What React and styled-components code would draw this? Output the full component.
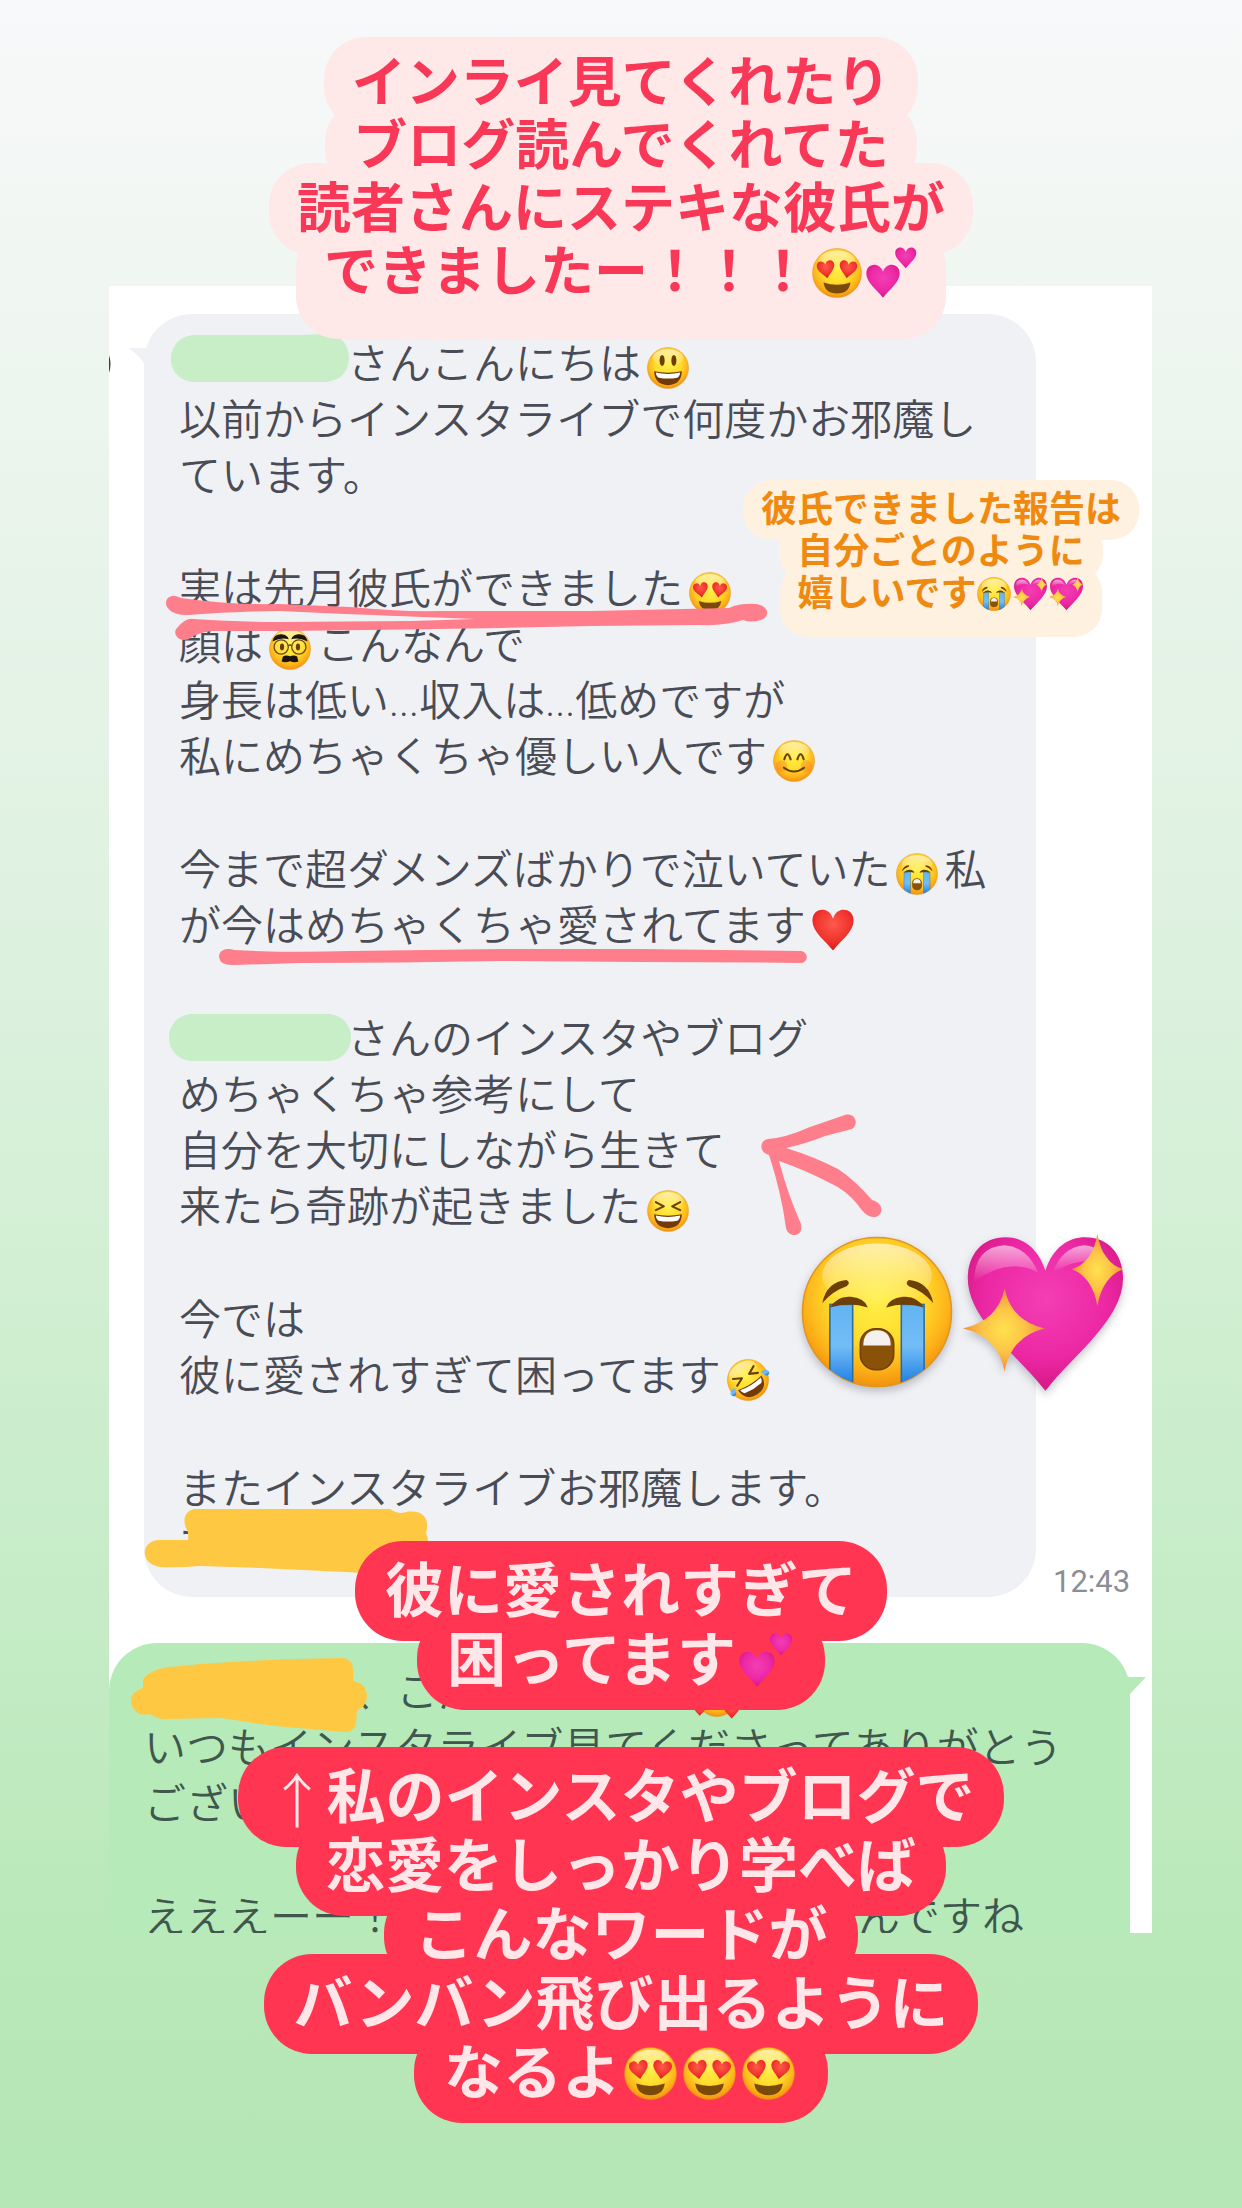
import styled, { createGlobalStyle } from "styled-components";

const GlobalStyle = createGlobalStyle`
  * {
    box-sizing: border-box;
  }
  body {
    margin: 0;
    font-family: Roboto, "Noto Sans CJK JP", sans-serif;
  }
`;

const Story = styled.main`
  position: relative;
  overflow: hidden;
  padding: 286px 90px 275px 109px;
  background: linear-gradient(#f8f9fa 0%, #eaf4ec 22%, #dcf1de 45%, #c9edca 68%, #b9e8b9 88%, #b5e6b5 100%);
`;

const Sheet = styled.section`
  padding-top: 28px;
  overflow: hidden;
  background: #ffffff;
`;

const MessageRow = styled.div`
  display: flex;
  align-items: flex-end;
  padding-left: 35px;
  margin-bottom: 46px;
`;

const Bubble = styled.article`
  flex: 1;
  min-width: 0;
  display: flex;
  flex-direction: column;
  gap: 57px;
  border-radius: 48px;
  font-size: 42px;
  font-weight: 350;
  line-height: 56px;
  white-space: nowrap;
`;

const ReceivedBubble = styled(Bubble)`
  padding: 23px 35px;
  color: #494c55;
  background: #f0f1f5;
`;

const SentBubble = styled(Bubble)`
  padding: 22px 35px 0;
  margin: 0 22px -13px 0;
  border-radius: 48px 48px 0 0;
  color: #3f574c;
  background: #b6eab9;
`;

const Paragraph = styled.p`
  margin: 0;
`;

const Line = styled.span`
  display: flex;
  align-items: center;
  height: 56px;
`;

const Blank = styled.span`
  flex: none;
  width: ${({ $chars }) => $chars}em;
`;

const Time = styled.time`
  flex: none;
  width: 116px;
  padding-left: 17px;
  font-size: 31px;
  line-height: 30px;
  color: #8b8e97;
`;

const Icon = styled.svg`
  flex: none;
  width: ${({ $size }) => $size}px;
  height: ${({ $size }) => $size}px;
  margin: ${({ $drop }) => $drop}px ${({ $side }) => $side}px 0;
  overflow: visible;
`;

const Drawing = styled.svg`
  position: absolute;
  top: 0;
  left: 0;
  width: 1242px;
  height: 2208px;
  pointer-events: none;
`;

const Defs = styled.svg`
  position: absolute;
  width: 0;
  height: 0;
`;

const BigEmojis = styled.div`
  position: absolute;
  top: 1234px;
  left: 801px;
  display: flex;
  gap: 10px;
  filter: drop-shadow(0 4px 4px rgba(60, 60, 80, 0.3));
`;

const Label = styled.p`
  position: absolute;
  isolation: isolate;
  display: flex;
  flex-direction: column;
  align-items: center;
  margin: 0;
  font-weight: 700;
  white-space: nowrap;
`;

const LabelLine = styled.span`
  position: relative;
  display: flex;
  align-items: center;

  &::before {
    content: "";
    position: absolute;
    z-index: -1;
  }
`;

const TitleLabel = styled(Label)`
  top: 52px;
  left: 0;
  right: 0;
  font-size: 54px;
  line-height: 63px;
  color: #f93858;

  ${LabelLine}::before {
    inset: -15px -28px -14px;
    border-radius: 42px;
    background: #fee8e8;
  }
  ${LabelLine}:last-child::before {
    bottom: -35px;
  }
`;

const NoteLabel = styled(Label)`
  top: 489px;
  right: 121px;
  font-size: 36px;
  line-height: 42px;
  color: #f0890f;

  ${LabelLine}::before {
    inset: -9px -18px;
    border-radius: 28px;
    background: #fef1e0;
  }
  ${LabelLine}:last-child::before {
    bottom: -22px;
  }
`;

const RedLabel = styled(Label)`
  top: ${({ $top }) => $top}px;
  left: 0;
  right: 0;
  font-size: 59px;
  line-height: 69px;
  color: #ffe6e9;

  ${LabelLine}::before {
    inset: -16px -30px -15px;
    border-radius: 48px;
    background: #ff3551;
  }
`;

const Arrow = styled.span`
  width: 59px;
  text-align: center;
  font-family: "Noto Sans CJK JP", sans-serif;
  font-weight: 300;
`;

const HEART = "M50 23 C45 8 35 2 25 2 C10 2 1 13 1 28 C1 54 32 76 50 99 C68 76 99 54 99 28 C99 13 90 2 75 2 C65 2 55 8 50 23 Z";

const Face = () => (
  <>
    <circle cx="50" cy="50" r="49" fill="url(#face)" stroke="#e2951c" strokeWidth="1" />
    <ellipse cx="50" cy="26" rx="36" ry="21" fill="url(#shine)" />
  </>
);

const Heart = ({ x = 0, y = 0, scale = 1, fill = "url(#pink)" }) => (
  <path d={HEART} fill={fill} transform={`translate(${x} ${y}) scale(${scale})`} />
);

const laughEyes = (
  <g fill="none" stroke="#6b3d07" strokeWidth="5" strokeLinecap="round" strokeLinejoin="round">
    <path d="M21 29 L40 39 L21 48" />
    <path d="M79 29 L60 39 L79 48" />
  </g>
);

const laughMouth = (
  <>
    <path d="M17 58 Q50 65 83 58 Q82 90 50 91 Q18 90 17 58 Z" fill="#713a08" />
    <path d="M21 61 Q50 67 79 61 Q78 71 72 73 Q50 77 28 73 Q22 71 21 61 Z" fill="#ffffff" />
  </>
);

const EMOJIS = {
  grin: {
    name: "笑顔",
    art: (
      <>
        <Face />
        <ellipse cx="36" cy="32" rx="6" ry="13" fill="#6b3d07" />
        <ellipse cx="64" cy="32" rx="6" ry="13" fill="#6b3d07" />
        {laughMouth}
      </>
    ),
  },
  heartEyes: {
    name: "目がハート",
    art: (
      <>
        <Face />
        <g transform="rotate(-8 28 42)">
          <Heart x={10} y={25} scale={0.36} fill="url(#red)" />
        </g>
        <g transform="rotate(8 72 42)">
          <Heart x={54} y={25} scale={0.36} fill="url(#red)" />
        </g>
        <path d="M23 69 Q50 78 77 69 Q74 91 50 91 Q26 91 23 69 Z" fill="#7a4a0a" />
      </>
    ),
  },
  disguise: {
    name: "変装した顔",
    art: (
      <>
        <Face />
        <path d="M8 32 Q12 14 30 15 Q44 16 47 27 Q30 21 8 32 Z M92 32 Q88 14 70 15 Q56 16 53 27 Q70 21 92 32 Z" fill="#1b1512" />
        <g fill="#ffe251" fillOpacity="0.5" stroke="#6b4a12" strokeWidth="3">
          <circle cx="29" cy="45" r="17" />
          <circle cx="71" cy="45" r="17" />
          <path d="M46 42 Q50 39 54 42" fill="none" />
        </g>
        <ellipse cx="31" cy="45" rx="5" ry="8" fill="#6b3d07" />
        <ellipse cx="69" cy="45" rx="5" ry="8" fill="#6b3d07" />
        <path d="M33 68 Q40 63 50 67 Q60 63 67 68 L70 80 Q60 83 50 79 Q40 83 30 80 Z" fill="#1b1512" />
      </>
    ),
  },
  smile: {
    name: "にっこり",
    art: (
      <>
        <Face />
        <circle cx="20" cy="62" r="14" fill="#f77c28" opacity="0.4" />
        <circle cx="80" cy="62" r="14" fill="#f77c28" opacity="0.4" />
        <g fill="none" stroke="#6b3d07" strokeWidth="5" strokeLinecap="round">
          <path d="M27 46 Q34 22 42 46" />
          <path d="M58 46 Q66 22 73 46" />
          <path d="M26 66 Q50 84 74 66" />
        </g>
      </>
    ),
  },
  cry: {
    name: "大泣き",
    art: (
      <>
        <Face />
        <g clipPath="url(#faceClip)">
          <rect x="19" y="45" width="15" height="55" fill="url(#tear)" stroke="#2b6b9c" strokeWidth="1" />
          <rect x="66" y="45" width="15" height="55" fill="url(#tear)" stroke="#2b6b9c" strokeWidth="1" />
        </g>
        <path d="M14 44 Q17 30 30 29 Q33 31 30 33 Q21 36 14 44 Z M87 44 Q84 30 71 29 Q68 31 71 33 Q80 36 87 44 Z" fill="#6e3f06" />
        <path d="M19 47 Q24 39 33 40 Q42 41 44 47 Q32 43 19 47 Z M81 47 Q76 39 67 40 Q58 41 56 47 Q68 43 81 47 Z" fill="#6e3f06" />
        <rect x="39" y="61" width="22" height="27" rx="10" fill="#8a5208" stroke="#6e3f06" strokeWidth="1" />
        <path d="M41 72 Q41 62 50 62 Q59 62 59 72 Z" fill="#f4f1ef" />
      </>
    ),
  },
  laugh: {
    name: "大笑い",
    art: (
      <>
        <Face />
        {laughEyes}
        {laughMouth}
      </>
    ),
  },
  rofl: {
    name: "笑い転げる",
    art: (
      <g transform="rotate(-32 50 50)">
        <Face />
        {laughEyes}
        {laughMouth}
        <path d="M13 50 Q0 48 -3 57 Q-3 67 6 65 Q12 62 13 50 Z" fill="url(#tear)" />
        <path d="M87 50 Q100 48 103 57 Q103 67 94 65 Q88 62 87 50 Z" fill="url(#tear)" />
      </g>
    ),
  },
  adore: {
    name: "ハートに囲まれた顔",
    art: (
      <>
        <Face />
        <path d="M30 66 Q50 82 70 66" fill="none" stroke="#6b3d07" strokeWidth="5" strokeLinecap="round" />
        <Heart x={66} y={66} scale={0.38} fill="url(#red)" />
        <Heart x={-6} y={68} scale={0.3} fill="url(#red)" />
        <Heart x={70} y={0} scale={0.3} fill="url(#red)" />
      </>
    ),
  },
  heart: { name: "赤いハート", art: <Heart fill="url(#red)" /> },
  twoHearts: {
    name: "2つのハート",
    art: (
      <>
        <Heart x={0} y={32} scale={0.68} />
        <Heart x={58} y={-2} scale={0.43} />
      </>
    ),
  },
  sparkHeart: {
    name: "輝くハート",
    art: (
      <>
        <Heart x={2} scale={0.99} />
        <path d="M7 30 Q7 8 26 7 Q40 8 47 24 Q28 14 7 30 Z" fill="url(#shine)" />
        <path d="M56 24 Q62 8 76 7 Q88 8 93 20 Q76 12 56 24 Z" fill="url(#shine)" />
        <path d="M84 0 Q87 18 100 22 Q87 27 84 45 Q81 27 68 22 Q81 18 84 0 Z" fill="url(#spark)" />
        <path d="M26 34 Q30 54 51 59 Q30 64 26 86 Q22 64 0 59 Q22 54 26 34 Z" fill="url(#spark)" />
      </>
    ),
  },
};

const Emoji = ({ type, size = 42, side = 6, drop = 6 }) => (
  <Icon viewBox="0 0 100 100" role="img" aria-label={EMOJIS[type].name} $size={size} $side={side} $drop={drop}>
    {EMOJIS[type].art}
  </Icon>
);

const TitleEmoji = (props) => <Emoji size={50} side={2} drop={0} {...props} />;
const NoteEmoji = (props) => <Emoji size={34} side={1} drop={0} {...props} />;
const RedEmoji = (props) => <Emoji size={53} side={3} drop={0} {...props} />;

const Gradients = () => (
  <Defs aria-hidden="true">
    <defs>
      <radialGradient id="face" cx="0.5" cy="0.4" r="0.62">
        <stop offset="0" stopColor="#fff04a" />
        <stop offset="0.5" stopColor="#ffdc2c" />
        <stop offset="0.78" stopColor="#fdb31a" />
        <stop offset="1" stopColor="#ef8b0c" />
      </radialGradient>
      <linearGradient id="shine" x1="0" y1="0" x2="0" y2="1">
        <stop offset="0" stopColor="#ffffff" stopOpacity="0.6" />
        <stop offset="1" stopColor="#ffffff" stopOpacity="0" />
      </linearGradient>
      <linearGradient id="tear" x1="0" y1="0" x2="0" y2="1">
        <stop offset="0" stopColor="#63b4f2" />
        <stop offset="0.5" stopColor="#72bdf6" />
        <stop offset="1" stopColor="#1778e0" />
      </linearGradient>
      <radialGradient id="pink" cx="0.5" cy="0.4" r="0.65">
        <stop offset="0" stopColor="#f43eb4" />
        <stop offset="0.6" stopColor="#ec28a4" />
        <stop offset="1" stopColor="#d0147c" />
      </radialGradient>
      <radialGradient id="red" cx="0.5" cy="0.35" r="0.65">
        <stop offset="0" stopColor="#ff5a4c" />
        <stop offset="0.7" stopColor="#ee2f2a" />
        <stop offset="1" stopColor="#cf1a1c" />
      </radialGradient>
      <radialGradient id="spark" cx="0.5" cy="0.5" r="0.5">
        <stop offset="0" stopColor="#ffe14f" />
        <stop offset="0.5" stopColor="#fdc546" />
        <stop offset="1" stopColor="#f0913a" />
      </radialGradient>
      <clipPath id="faceClip">
        <circle cx="50" cy="50" r="49" />
      </clipPath>
    </defs>
  </Defs>
);

// bubble tails, marker strokes and the strips over the names
const Doodles = () => (
  <Drawing viewBox="0 0 1242 2208" aria-hidden="true">
    <path d="M128 348 H146 V366 Q138 354 128 348 Z" fill="#f0f1f5" />
    <path d="M1126 1677 H1146 L1130 1694 H1126 Z" fill="#b6eab9" />
    <path d="M109 355 Q112 364 109 373 Z" fill="#4a3a42" />
    <g fill="#c8eec8">
      <path d="M194 335 H300 L326 334 C341 334 349 345 349 358 C349 372 340 381 325 382 H194 C179 381 171 371 171 359 C171 346 180 336 194 335 Z" />
      <rect x="169" y="1014" width="182" height="47" rx="23" />
    </g>
    <g fill="#fe7e8b">
      <path d="M166 603 C166 596 174 594 181 598 Q230 605 279 604 L350 607 Q400 612 440 611 L591 611 L729 608 Q740 603 756 604 C770 606 770 617 761 620 Q750 623 743 620 Q725 626 700 625 L591 626 L502 628 L368 630 L279 631 L212 631 Q196 633 189 639 C178 643 172 633 177 628 Q186 617 194 619 Q240 622 279 622 L412 621 L475 619 Q400 616 345 614 L279 611 Q220 612 189 615 C174 616 166 609 166 603 Z" />
      <path d="M219 957 C219 949 228 948 234 950 Q290 953 350 951 L500 949 L640 949 Q720 950 801 951 C808 952 809 961 802 963 Q720 962 640 962 L500 961 Q400 963 300 963 L235 965 Q220 966 219 957 Z" />
      <path d="M768 1139 Q785 1138 810 1127 L845 1115 C854 1112 860 1123 852 1129 L825 1136 Q808 1143 786 1148 Q815 1157 838 1169 Q855 1180 872 1200 C884 1203 884 1215 875 1217 C868 1218 862 1211 858 1205 Q846 1190 830 1183 Q805 1170 779 1161 Q788 1195 801 1224 C804 1238 788 1238 786 1228 Q781 1191 769 1155 C758 1152 760 1140 768 1139 Z" />
    </g>
    <g fill="#fec843">
      <path d="M194 1509 H390 Q399 1515 406 1512 C424 1509 430 1520 426 1533 Q430 1542 426 1552 L400 1575 L345 1572 L260 1568 L200 1566 Q177 1568 160 1567 C140 1564 140 1542 158 1540 L188 1540 Q189 1532 186 1528 C182 1518 186 1511 194 1509 Z" />
      <path d="M143 1680 Q148 1670 170 1667 Q230 1660 343 1658 C354 1660 354 1669 353 1681 Q366 1683 367 1696 Q366 1708 357 1710 L356 1724 Q353 1733 344 1732 L275 1726 L221 1718 L168 1719 Q158 1720 150 1714 C136 1718 131 1706 131 1700 Q132 1691 143 1688 Z" />
    </g>
  </Drawing>
);

export default function App() {
  return (
    <Story>
      <GlobalStyle />
      <Gradients />
      <Sheet>
        <MessageRow>
          <ReceivedBubble>
            <Paragraph>
              <Line>
                <Blank $chars={4} />
                さんこんにちは
                <Emoji type="grin" />
              </Line>
              <Line>以前からインスタライブで何度かお邪魔し</Line>
              <Line>ています。</Line>
            </Paragraph>
            <Paragraph>
              <Line>
                実は先月彼氏ができました
                <Emoji type="heartEyes" />
              </Line>
              <Line>
                顔は
                <Emoji type="disguise" />
                こんなんで
              </Line>
              <Line>身長は低い...収入は...低めですが</Line>
              <Line>
                私にめちゃくちゃ優しい人です
                <Emoji type="smile" />
              </Line>
            </Paragraph>
            <Paragraph>
              <Line>
                今まで超ダメンズばかりで泣いていた
                <Emoji type="cry" />私
              </Line>
              <Line>
                が今はめちゃくちゃ愛されてます
                <Emoji type="heart" />
              </Line>
            </Paragraph>
            <Paragraph>
              <Line>
                <Blank $chars={4} />
                さんのインスタやブログ
              </Line>
              <Line>めちゃくちゃ参考にして</Line>
              <Line>自分を大切にしながら生きて</Line>
              <Line>
                来たら奇跡が起きました
                <Emoji type="laugh" />
              </Line>
            </Paragraph>
            <Paragraph>
              <Line>今では</Line>
              <Line>
                彼に愛されすぎて困ってます
                <Emoji type="rofl" />
              </Line>
            </Paragraph>
            <Paragraph>
              <Line>またインスタライブお邪魔します。</Line>
              <Line>マ</Line>
            </Paragraph>
          </ReceivedBubble>
          <Time>12:43</Time>
        </MessageRow>
        <SentBubble>
          <Paragraph>
            <Line>
              <Blank $chars={5} />
              、こんにちは
              <Blank $chars={2} />
              <Emoji type="adore" />
            </Line>
            <Line>いつもインスタライブ見てくださってありがとう</Line>
            <Line>ございます</Line>
          </Paragraph>
          <Paragraph>
            <Line>
              えええーー！
              <Blank $chars={11} />
              んですね
            </Line>
          </Paragraph>
        </SentBubble>
      </Sheet>

      <Doodles />

      <BigEmojis>
        <Emoji type="cry" size={152} side={0} drop={2} />
        <Emoji type="sparkHeart" size={160} side={0} drop={0} />
      </BigEmojis>

      <TitleLabel>
        <LabelLine>インライ見てくれたり</LabelLine>
        <LabelLine>ブログ読んでくれてた</LabelLine>
        <LabelLine>読者さんにステキな彼氏が</LabelLine>
        <LabelLine>
          できましたー！！！
          <TitleEmoji type="heartEyes" />
          <TitleEmoji type="twoHearts" />
        </LabelLine>
      </TitleLabel>

      <NoteLabel>
        <LabelLine>彼氏できました報告は</LabelLine>
        <LabelLine>自分ごとのように</LabelLine>
        <LabelLine>
          嬉しいです
          <NoteEmoji type="cry" />
          <NoteEmoji type="sparkHeart" />
          <NoteEmoji type="sparkHeart" />
        </LabelLine>
      </NoteLabel>

      <RedLabel $top={1557}>
        <LabelLine>彼に愛されすぎて</LabelLine>
        <LabelLine>
          困ってます
          <RedEmoji type="twoHearts" />
        </LabelLine>
      </RedLabel>

      <RedLabel $top={1763}>
        <LabelLine>
          <Arrow>↑</Arrow>
          私のインスタやブログで
        </LabelLine>
        <LabelLine>恋愛をしっかり学べば</LabelLine>
        <LabelLine>こんなワードが</LabelLine>
        <LabelLine>バンバン飛び出るように</LabelLine>
        <LabelLine>
          なるよ
          <RedEmoji type="heartEyes" />
          <RedEmoji type="heartEyes" />
          <RedEmoji type="heartEyes" />
        </LabelLine>
      </RedLabel>
    </Story>
  );
}
